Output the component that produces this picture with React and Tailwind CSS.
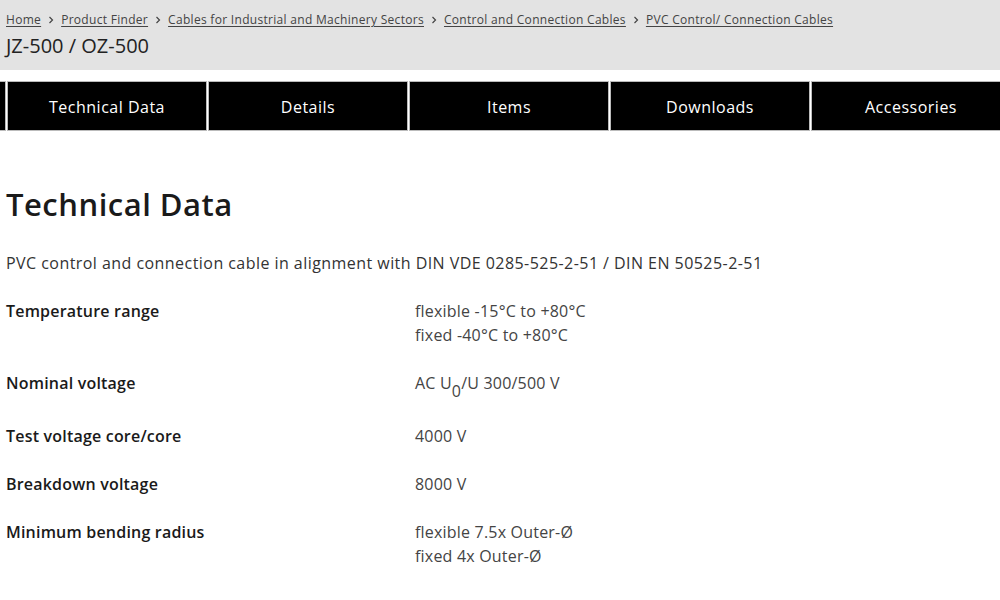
const crumbs = [
  "Home",
  "Product Finder",
  "Cables for Industrial and Machinery Sectors",
  "Control and Connection Cables",
  "PVC Control/ Connection Cables",
];

const tabs = ["Technical Data", "Details", "Items", "Downloads", "Accessories"];

const rows = [
  { label: "Temperature range", values: ["flexible -15°C to +80°C", "fixed -40°C to +80°C"] },
  {
    label: "Nominal voltage",
    extra: "pb-[5px]",
    values: [
      <>
        AC U<sub className="text-[16px] align-[-4px] leading-none">0</sub>/U 300/500 V
      </>,
    ],
  },
  { label: "Test voltage core/core", values: ["4000 V"] },
  { label: "Breakdown voltage", values: ["8000 V"] },
  { label: "Minimum bending radius", values: ["flexible 7.5x Outer-Ø", "fixed 4x Outer-Ø"] },
];

function Chevron() {
  return (
    <svg width="8" height="8" viewBox="0 0 8 8" className="mx-[6px] text-[#444]">
      <path d="M2.5 1 L5.5 4 L2.5 7" fill="none" stroke="currentColor" strokeWidth="1.2" />
    </svg>
  );
}

export default function App() {
  return (
    <div className="min-h-screen bg-white text-[#222] font-['Open_Sans',sans-serif] overflow-hidden">
      {/* header */}
      <div className="bg-[#e3e3e3] h-[70px] px-[6px] pt-[11px]">
        <div className="flex items-center text-[12px] tracking-[0.3px] text-[#444]">
          {crumbs.map((c, i) => (
            <div key={c} className="flex items-center">
              {i > 0 && <Chevron />}
              <a className="underline underline-offset-2">{c}</a>
            </div>
          ))}
        </div>
        <h1 className="text-[20px] leading-6 mt-[5px] text-[#222]">JZ-500 / OZ-500</h1>
      </div>

      {/* tabs */}
      <div className="mt-[11px] flex gap-[1px] w-[1020px] h-[50px]">
        <div className="w-[6px] bg-black border-y border-r border-[#bbb]" />
        {tabs.map((t) => (
          <div
            key={t}
            className="w-[200px] shrink-0 bg-black border border-[#bbb] text-white text-[16px] tracking-[0.5px] flex items-center justify-center pt-[1px]"
          >
            {t}
          </div>
        ))}
      </div>

      {/* content */}
      <div className="px-[6px] pt-[55px]">
        <h2 className="text-[31px] tracking-[0.5px] font-semibold leading-9 text-[#1a1a1a]">Technical Data</h2>
        <p className="mt-[29px] text-[16px] leading-6 tracking-[0.45px] text-[#333]">
          PVC control and connection cable in alignment with DIN VDE 0285-525-2-51 / DIN EN 50525-2-51
        </p>
        <div className="mt-[24px] flex flex-col gap-[24px]">
          {rows.map((r) => (
            <div key={r.label} className={`flex text-[16px] leading-6 tracking-[0.2px] ${r.extra || ""}`}>
              <div className="w-[409px] shrink-0 font-semibold text-[#1a1a1a]">{r.label}</div>
              <div className="text-[#444]">
                {r.values.map((v, i) => (
                  <div key={i}>{v}</div>
                ))}
              </div>
            </div>
          ))}
        </div>
      </div>
    </div>
  );
}
